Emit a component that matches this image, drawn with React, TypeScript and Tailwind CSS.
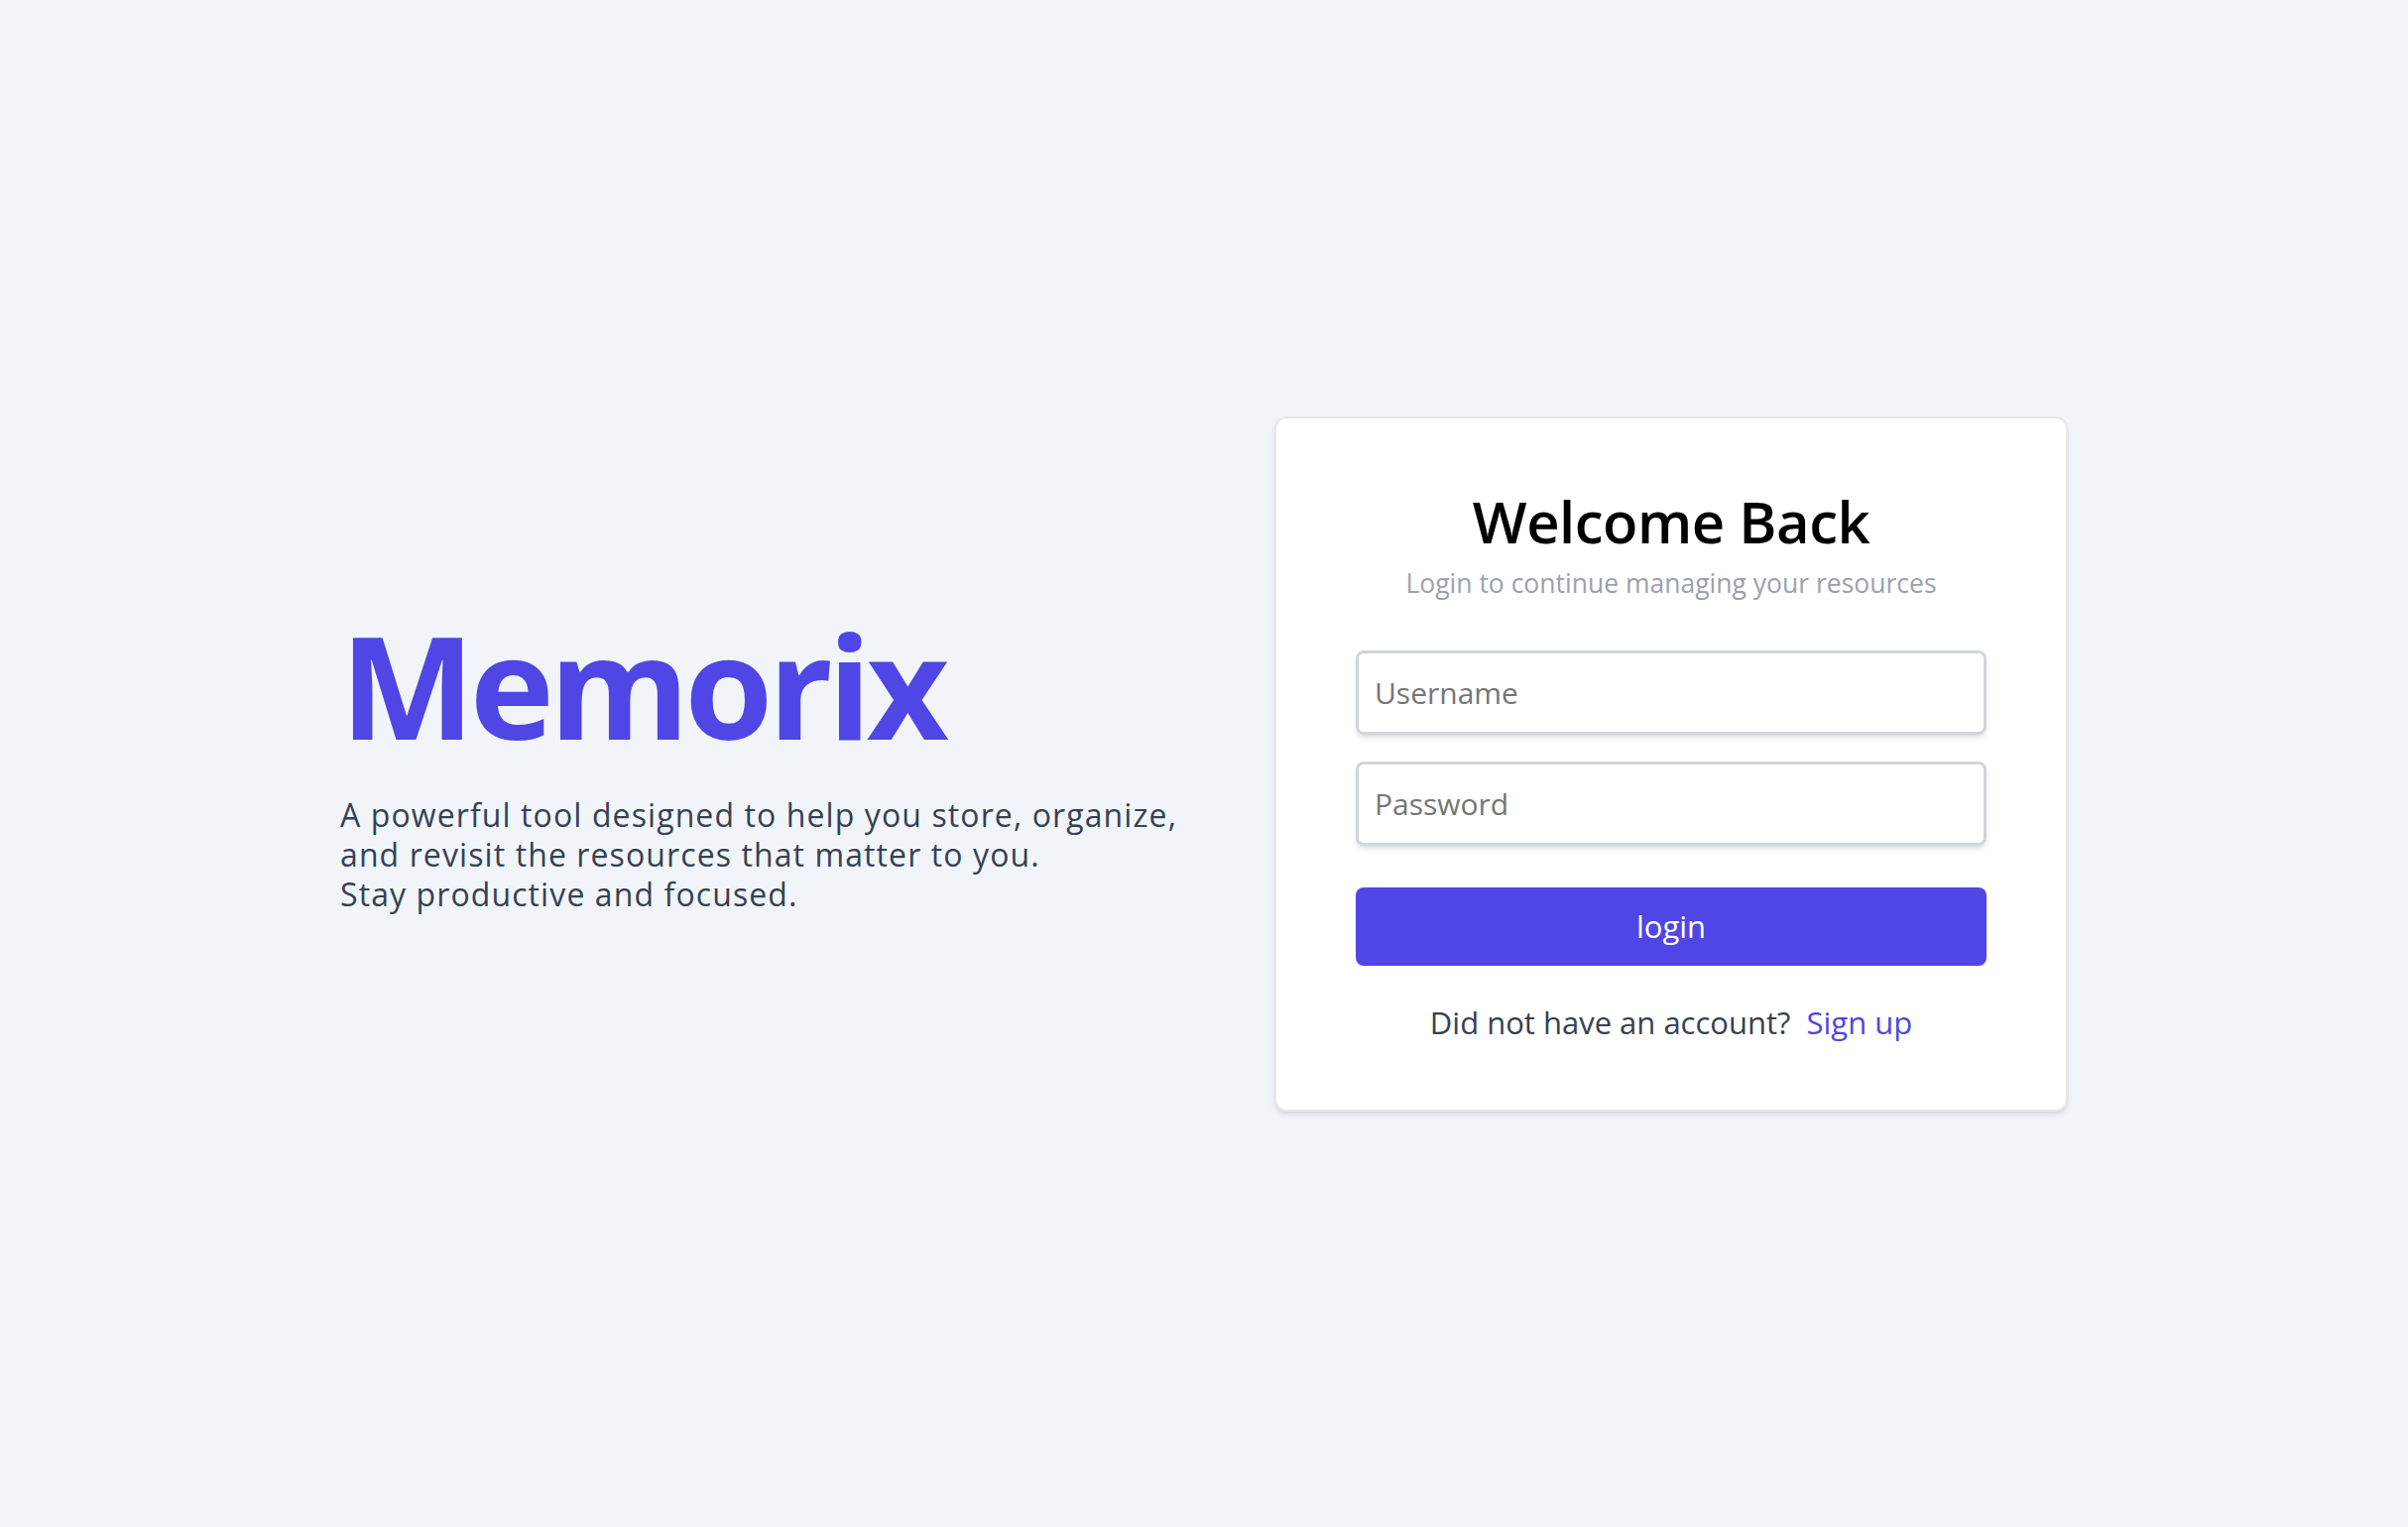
import React, { useState } from 'react';

const font = { fontFamily: '"Open Sans", "Noto Sans", sans-serif' };

const LoginCard: React.FC = () => {
  const [username, setUsername] = useState('');
  const [password, setPassword] = useState('');

  return (
    <div className="w-[800px] bg-white rounded-xl border-2 border-[#e5e7eb] shadow-md px-20 pt-[68px] pb-[68px] flex flex-col items-center">
      <h1 className="text-[58px] leading-[72px] font-semibold text-black tracking-[-0.5px]">Welcome Back</h1>
      <p className="mt-2 text-[26.5px] leading-[36px] text-gray-400">
        Login to continue managing your resources
      </p>

      <input
        value={username}
        onChange={(e) => setUsername(e.target.value)}
        placeholder="Username"
        className="mt-[50px] w-full h-[85px] px-4 rounded-lg border-[3px] border-gray-300 shadow-md text-[30px] text-gray-800 placeholder:text-[#757575] outline-none"
      />
      <input
        type="password"
        value={password}
        onChange={(e) => setPassword(e.target.value)}
        placeholder="Password"
        className="mt-[27px] w-full h-[85px] px-4 rounded-lg border-[3px] border-gray-300 shadow-md text-[30px] text-gray-800 placeholder:text-[#757575] outline-none"
      />

      <button className="mt-[42px] w-full h-[79px] rounded-lg bg-[#4f46e5] text-white text-[31px]">
        login
      </button>

      <p className="mt-[37px] text-[31px] leading-[40px] text-gray-700">
        Did not have an account?{' '}
        <a href="#" className="ml-2 text-[#4f46e5]">Sign up</a>
      </p>
    </div>
  );
};

const App: React.FC = () => {
  return (
    <main style={font} className="min-h-screen w-full bg-[#f1f5f9] flex items-center justify-center gap-[96px]">
      <div className="w-[846px]">
        <h2 className="text-[144px] leading-none font-bold text-[#4f46e5] tracking-[-5px]">Memorix</h2>
        <p className="mt-10 text-[32px] leading-[40px] text-gray-700 tracking-[1.1px] whitespace-nowrap">
          A powerful tool designed to help you store, organize,
          <br />
          and revisit the resources that matter to you.
          <br />
          Stay productive and focused.
        </p>
      </div>
      <LoginCard />
    </main>
  );
};

export default App;
